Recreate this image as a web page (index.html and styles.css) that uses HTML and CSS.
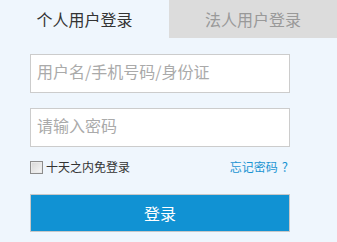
FILE: index.html
```html
<!DOCTYPE html>
<html lang="zh-CN">
<head>
<meta charset="utf-8">
<title>登录</title>
<link rel="stylesheet" href="styles.css">
</head>
<body>
<div class="login">
  <div class="tabs">
    <div class="tab tab-active">个人用户登录</div>
    <div class="tab tab-inactive">法人用户登录</div>
  </div>
  <form class="form">
    <input class="field field-first" type="text" placeholder="用户名/手机号码/身份证">
    <input class="field field-second" type="password" placeholder="请输入密码">
    <div class="row">
      <label class="remember"><input class="check" type="checkbox"><span>十天之内免登录</span></label>
      <a class="forgot" href="#">忘记密码<span class="qmark">?</span></a>
    </div>
    <button class="submit" type="button">登录</button>
  </form>
</div>
</body>
</html>
```
FILE: styles.css
```css
html, body {
  margin: 0;
  padding: 0;
}
body {
  background: #eff6fd;
  font-family: "Noto Sans CJK SC", "Noto Sans", sans-serif;
  width: 337px;
  height: 242px;
  overflow: hidden;
}
.login {
  width: 337px;
}
.tabs {
  display: flex;
  height: 38px;
}
.tab {
  font-size: 16px;
  line-height: 38px;
  text-align: center;
}
.tab-active {
  width: 169px;
  color: #333;
}
.tab-inactive {
  flex: 1;
  background: #dcdcdc;
  color: #999;
}
.form {
  display: flex;
  flex-direction: column;
  width: 260px;
  margin: 0 0 0 30px;
}
.field {
  box-sizing: border-box;
  width: 260px;
  height: 39px;
  margin: 0;
  border: 1px solid #cccccc;
  background: #fff;
  padding: 0 6px 5px 6px;
  font-family: inherit;
  font-size: 16px;
  color: #333;
  outline: none;
}
.field::placeholder {
  color: #aaaaaa;
}
.field-first {
  margin-top: 16px;
}
.field-second {
  margin-top: 15px;
}
.row {
  display: flex;
  justify-content: space-between;
  align-items: center;
  height: 14px;
  margin-top: 13px;
  font-size: 12px;
  line-height: 14px;
}
.remember {
  display: flex;
  align-items: center;
  gap: 3px;
  color: #333;
}
.check {
  appearance: none;
  -webkit-appearance: none;
  box-sizing: border-box;
  width: 13px;
  height: 13px;
  margin: 0;
  border: 1px solid #8d8d8d;
  background: linear-gradient(135deg, #d6d6d6, #f8f8f8);
  box-shadow: inset 0 0 0 1px #eaeaea;
}
.forgot {
  color: #1a94d2;
  text-decoration: none;
  margin-right: 2px;
}
.qmark {
  margin-left: 4px;
  font-size: 13px;
}
.submit {
  box-sizing: border-box;
  width: 260px;
  height: 38px;
  margin-top: 20px;
  border: 1px solid #c8c8c8;
  background: #1192d3;
  color: #fff;
  font-family: inherit;
  font-size: 16px;
  padding: 0;
}
```
